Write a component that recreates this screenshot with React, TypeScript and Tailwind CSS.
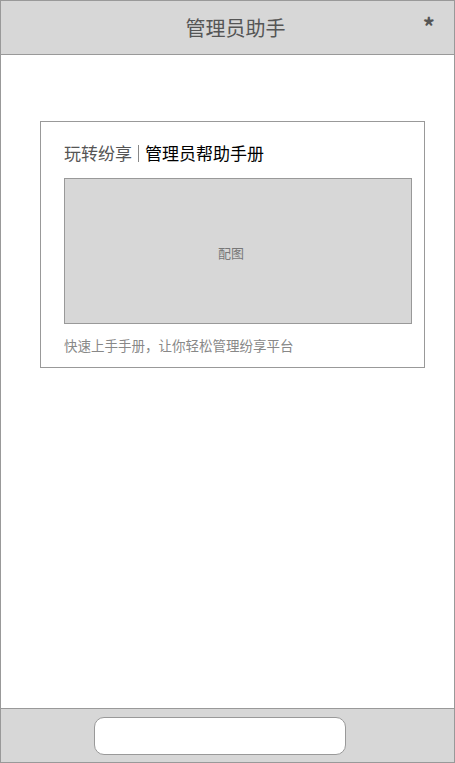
const font = { fontFamily: '"Noto Sans CJK SC", "Liberation Sans", sans-serif' }

export default function App() {
  return (
    <div
      className="w-[455px] h-[763px] border border-[#999] flex flex-col bg-white"
      style={font}
    >
      <header className="relative h-[54px] shrink-0 bg-[#d7d7d7] border-b border-[#999] flex items-center justify-center pl-4">
        <h1 className="text-[20px] text-[#555] leading-none">管理员助手</h1>
        <span className="absolute right-[19px] top-[13px] text-[24px] leading-none text-[#555] font-bold">*</span>
      </header>

      <main className="flex-1 pt-[66px]">
        <section className="ml-[39px] w-[385px] border border-[#999] pl-[23px] pt-[20px] pb-[12px]">
          <div className="h-[22px] leading-[22px] text-[17px] flex items-center">
            <span className="text-[#555]">玩转纷享</span>
            <span className="mx-[6px] w-px h-[17px] bg-[#888]" />
            <span className="text-black">管理员帮助手册</span>
          </div>
          <div className="mt-[14px] w-[348px] h-[146px] bg-[#d7d7d7] border border-[#999] flex items-center justify-center pt-[3px] pr-[14px]">
            <span className="text-[13px] text-[#777]">配图</span>
          </div>
          <p className="mt-[11px] text-[13.5px] leading-[20px] text-[#888]">快速上手手册，让你轻松管理纷享平台</p>
        </section>
      </main>

      <footer className="h-[54px] shrink-0 bg-[#d7d7d7] border-t border-[#999] pt-[8px]">
        <button className="ml-[93px] w-[252px] h-[38px] bg-white border border-[#999] rounded-[10px]" />
      </footer>
    </div>
  )
}
